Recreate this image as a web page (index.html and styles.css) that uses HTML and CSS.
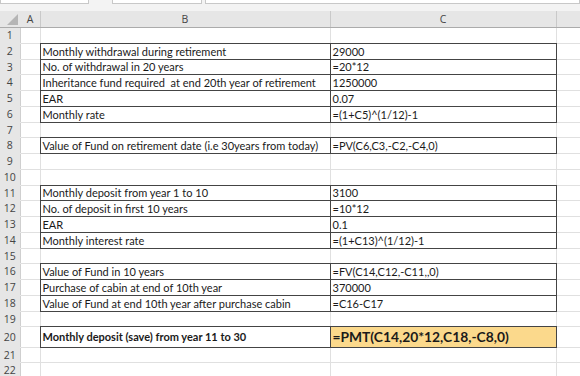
FILE: index.html
```html
<!DOCTYPE html>
<html>
<head>
<meta charset="utf-8">
<link rel="stylesheet" href="styles.css">
</head>
<body>
<div class="topbar">
  <div class="tb-box tb-name"></div>
  <div class="tb-box tb-fx"></div>
  <div class="tb-box tb-formula"></div>
</div>
<table class="sheet">
  <colgroup>
    <col class="c-rh"><col class="c-a"><col class="c-b"><col class="c-c"><col class="c-d">
  </colgroup>
  <thead>
    <tr class="hdr">
      <th class="corner"><svg class="tri" width="11" height="11" viewBox="0 0 11 11"><polygon points="11,0 11,11 0,11" fill="#b5b5b5"/></svg></th>
      <th>A</th><th>B</th><th>C</th><th></th>
    </tr>
  </thead>
  <tbody>
    <tr><th>1</th><td></td><td></td><td></td><td></td></tr>
    <tr><th>2</th><td></td><td class="bx">Monthly withdrawal during retirement</td><td class="bx">29000</td><td></td></tr>
    <tr><th>3</th><td></td><td class="bx">No. of withdrawal in 20 years</td><td class="bx">=20*12</td><td></td></tr>
    <tr><th>4</th><td></td><td class="bx">Inheritance fund required  at end 20th year of retirement</td><td class="bx">1250000</td><td></td></tr>
    <tr><th>5</th><td></td><td class="bx">EAR</td><td class="bx">0.07</td><td></td></tr>
    <tr><th>6</th><td></td><td class="bx">Monthly rate</td><td class="bx">=(1+C5)^(1/12)-1</td><td></td></tr>
    <tr><th>7</th><td></td><td></td><td></td><td></td></tr>
    <tr><th>8</th><td></td><td class="bx">Value of Fund on retirement date (i.e 30years from today)</td><td class="bx">=PV(C6,C3,-C2,-C4,0)</td><td></td></tr>
    <tr><th>9</th><td></td><td></td><td></td><td></td></tr>
    <tr><th>10</th><td></td><td></td><td></td><td></td></tr>
    <tr><th>11</th><td></td><td class="bx">Monthly deposit from year 1 to 10</td><td class="bx">3100</td><td></td></tr>
    <tr><th>12</th><td></td><td class="bx">No. of deposit in first 10 years</td><td class="bx">=10*12</td><td></td></tr>
    <tr><th>13</th><td></td><td class="bx">EAR</td><td class="bx">0.1</td><td></td></tr>
    <tr><th>14</th><td></td><td class="bx">Monthly interest rate</td><td class="bx">=(1+C13)^(1/12)-1</td><td></td></tr>
    <tr><th>15</th><td></td><td></td><td></td><td></td></tr>
    <tr><th>16</th><td></td><td class="bx">Value of Fund in 10 years</td><td class="bx">=FV(C14,C12,-C11,,0)</td><td></td></tr>
    <tr><th>17</th><td></td><td class="bx">Purchase of cabin at end of 10th year</td><td class="bx">370000</td><td></td></tr>
    <tr><th>18</th><td></td><td class="bx">Value of Fund at end 10th year after purchase cabin</td><td class="bx">=C16-C17</td><td></td></tr>
    <tr><th>19</th><td></td><td></td><td></td><td></td></tr>
    <tr class="tall"><th>20</th><td></td><td class="bx bold">Monthly deposit (save) from year 11 to 30</td><td class="bx result">=PMT(C14,20*12,C18,-C8,0)</td><td></td></tr>
    <tr><th>21</th><td></td><td></td><td></td><td></td></tr>
    <tr><th>22</th><td></td><td></td><td></td><td></td></tr>
  </tbody>
</table>
</body>
</html>
```

FILE: styles.css
```css
html, body {
  margin: 0;
  padding: 0;
  background: #ffffff;
  overflow: hidden;
}
body {
  width: 580px;
  height: 376px;
  font-family: Lato, "Liberation Sans", sans-serif;
}
.topbar {
  height: 11px;
  background: #f3f3f3;
  display: flex;
  align-items: flex-start;
}
.tb-box {
  height: 3px;
  background: #ffffff;
  border: 1px solid #c8c8c8;
  border-top: 0;
}
.tb-name { width: 87px; }
.tb-fx { width: 88px; margin-left: 23px; }
.tb-formula { flex: 1; margin-left: 3px; }

.sheet {
  border-collapse: collapse;
  table-layout: fixed;
  width: 580px;
}
.c-rh { width: 20px; }
.c-a { width: 20px; }
.c-b { width: 290px; }
.c-c { width: 226px; }
.c-d { width: 24px; }
col { border-right: 1px solid #e0e0e0; }

.hdr { height: 16.5px; }
.hdr th {
  background: #e6e6e6;
  color: #444444;
  font-family: "Open Sans", "Liberation Sans", sans-serif;
  font-weight: 400;
  font-size: 10.5px;
  line-height: 1;
  padding: 0;
  border-right: 1px solid #c9c9c9;
  border-bottom: 1px solid #ababab;
  vertical-align: middle;
}
.hdr th.corner {
  text-align: right;
  vertical-align: bottom;
  border-right-color: #e6e6e6;
}
.tri { display: block; margin: 0 2px 2px auto; }

tbody tr {
  height: 15.75px;
  border-bottom: 1px solid #e0e0e0;
}
tbody tr.tall { height: 20.3px; }
tbody th {
  background: #e6e6e6;
  color: #444444;
  font-family: "Open Sans", "Liberation Sans", sans-serif;
  font-weight: 400;
  font-size: 10.5px;
  line-height: 1;
  padding: 0;
  text-align: center;
  border-bottom: 1px solid #e6e6e6;
  border-right: 1px solid #cfcfcf;
}
td {
  padding: 0 0 0 2px;
  font-size: 11px;
  line-height: 1;
  color: #1a1a1a;
  white-space: pre;
  overflow: hidden;
  vertical-align: middle;
}
td.bx { border: 1px solid #444444; }
td.bold { font-weight: 700; }
td.result {
  background: #fbd98c;
  font-weight: 700;
  font-size: 13.8px;
}
```
